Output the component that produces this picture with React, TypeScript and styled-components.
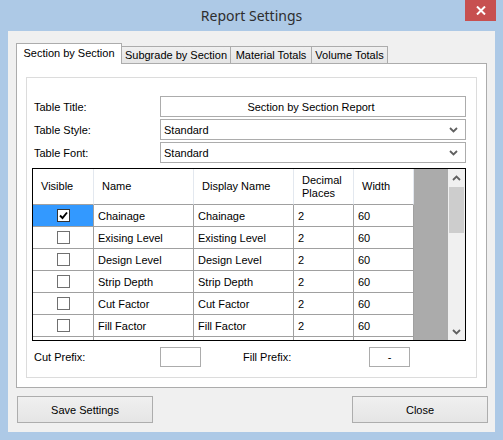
import React from 'react'
import styled, { createGlobalStyle } from 'styled-components'

const GlobalStyle = createGlobalStyle`
  html, body { margin: 0; padding: 0; }
  body {
    font-family: "Liberation Sans", Arial, sans-serif;
    font-size: 11px;
    color: #000;
    background: #adc9e6;
  }
  * { box-sizing: border-box; }
`

const Window = styled.div`
  position: relative;
  width: 503px;
  height: 440px;
  background: #adc9e6;
  display: flex;
  flex-direction: column;
  padding: 0 8px 8px;
  overflow: hidden;
`

const TitleBar = styled.div`
  height: 31px;
  display: flex;
  align-items: center;
  justify-content: center;
  padding-bottom: 1px;
  font-family: "Noto Sans", "Open Sans", sans-serif;
  font-size: 14px;
  color: #2e2e2e;
`

const CloseButton = styled.div`
  position: absolute;
  top: 0;
  right: 7px;
  width: 31px;
  height: 21px;
  background: #c75050;
  display: flex;
  align-items: center;
  justify-content: center;
`

const Client = styled.div`
  flex: 1;
  background: #f0f0f0;
  display: flex;
  flex-direction: column;
  padding: 12px 8px 0 8px;
`

const TabStrip = styled.div`
  display: flex;
  align-items: flex-end;
  height: 21px;
  position: relative;
  z-index: 1;
  margin-bottom: -1px;
`

const Tab = styled.div<{ $active?: boolean; $w: number }>`
  width: ${p => p.$w}px;
  height: ${p => (p.$active ? 21 : 18)}px;
  margin-left: ${p => (p.$active ? 0 : -1)}px;
  border: 1px solid #acacac;
  border-bottom: ${p => (p.$active ? 'none' : '1px solid #acacac')};
  background: ${p => (p.$active ? '#fff' : 'linear-gradient(#f0f0f0, #e5e5e5)')};
  display: flex;
  align-items: center;
  justify-content: center;
  padding-bottom: ${p => (p.$active ? 3 : 0)}px;
  white-space: nowrap;
  position: ${p => (p.$active ? 'relative' : 'static')};
  z-index: ${p => (p.$active ? 2 : 0)};
  &:first-child { margin-left: 0; }
`

const TabPanel = styled.div`
  height: 325px;
  background: #fff;
  border: 1px solid #acacac;
  padding: 13px 9px 9px 9px;
`

const GroupBox = styled.div`
  height: 100%;
  border: 1px solid #dcdcdc;
  padding: 18px 10px 10px 5px;
  display: flex;
  flex-direction: column;
`

const FormGrid = styled.div`
  display: grid;
  grid-template-columns: 128px 1fr;
  grid-auto-rows: 21px;
  row-gap: 2px;
`

const Label = styled.div`
  display: flex;
  align-items: center;
  padding-left: 2px;
`

const Field = styled.div<{ $center?: boolean }>`
  border: 1px solid #acacac;
  background: #fff;
  display: flex;
  align-items: center;
  justify-content: ${p => (p.$center ? 'center' : 'space-between')};
  padding: 0 7px 0 3px;
`

const Grid = styled.div`
  margin-top: 5px;
  height: 173px;
  border: 1px solid #000;
  display: flex;
  overflow: hidden;
`

const Columns = styled.div`
  width: 381px;
  display: flex;
  flex-direction: column;
`

const Row = styled.div<{ $h: number }>`
  display: flex;
  flex: 0 0 ${p => p.$h}px;
  height: ${p => p.$h}px;
`

const HeadCell = styled.div<{ $w: number }>`
  width: ${p => p.$w}px;
  border-right: 1px solid #e3e8ef;
  border-bottom: 1px solid #a0a0a0;
  background: #fff;
  display: flex;
  align-items: center;
  padding: 0 6px 0 8px;
  line-height: 13px;
`

const Cell = styled.div<{ $w: number; $selected?: boolean; $center?: boolean }>`
  width: ${p => p.$w}px;
  border-right: 1px solid #a0a0a0;
  border-bottom: 1px solid #a0a0a0;
  background: ${p => (p.$selected ? '#3399ff' : '#fff')};
  display: flex;
  align-items: center;
  justify-content: ${p => (p.$center ? 'center' : 'flex-start')};
  padding-left: ${p => (p.$center ? 0 : 4)}px;
  white-space: nowrap;
`

const CheckBox = styled.div<{ $dark?: boolean }>`
  width: 13px;
  height: 13px;
  border: 1px solid ${p => (p.$dark ? '#333' : '#707070')};
  background: #fff;
  display: flex;
  align-items: center;
  justify-content: center;
`

const GrayFill = styled.div`
  flex: 1;
  background: #ababab;
`

const ScrollBar = styled.div`
  width: 17px;
  background: #f0f0f0;
  display: flex;
  flex-direction: column;
`

const ScrollArrow = styled.div`
  height: 17px;
  display: flex;
  align-items: center;
  justify-content: center;
`

const Thumb = styled.div`
  height: 46px;
  margin: 1px 1px 0;
  background: #cdcdcd;
`

const Spacer = styled.div`
  flex: 1;
`

const PrefixRow = styled.div`
  margin-top: 6px;
  height: 20px;
  display: flex;
`

const PrefixLabel = styled(Label)<{ $w: number; $indent?: number }>`
  width: ${p => p.$w}px;
  padding-left: ${p => p.$indent ?? 2}px;
`

const PrefixBox = styled.div`
  width: 41px;
  border: 1px solid #acacac;
  background: #fff;
  display: flex;
  align-items: center;
  justify-content: center;
`

const ButtonRow = styled.div`
  margin: 8px -1px 0 1px;
  display: flex;
  justify-content: space-between;
`

const Button = styled.div`
  width: 136px;
  height: 27px;
  border: 1px solid #adadad;
  background: linear-gradient(#f0f0f0, #e5e5e5);
  display: flex;
  align-items: center;
  justify-content: center;
`

const Chevron = ({ up }: { up?: boolean }) => (
  <svg width="9" height="6" viewBox="0 0 9 6">
    <path
      d={up ? 'M1 5 L4.5 1.5 L8 5' : 'M1 1 L4.5 4.5 L8 1'}
      fill="none"
      stroke="#606060"
      strokeWidth="1.8"
    />
  </svg>
)

const widths = [61, 100, 100, 60, 60]
const headers = ['Visible', 'Name', 'Display Name', 'Decimal Places', 'Width']
const rows = [
  { name: 'Chainage', display: 'Chainage', checked: true },
  { name: 'Exising Level', display: 'Existing Level' },
  { name: 'Design Level', display: 'Design Level' },
  { name: 'Strip Depth', display: 'Strip Depth' },
  { name: 'Cut Factor', display: 'Cut Factor' },
  { name: 'Fill Factor', display: 'Fill Factor' },
  { name: '', display: '', blank: true },
]

export default function App() {
  return (
    <Window>
      <GlobalStyle />
      <TitleBar>Report Settings</TitleBar>
      <CloseButton>
        <svg width="10" height="9" viewBox="0 0 10 9">
          <path d="M1 0.5 L9 8.5 M9 0.5 L1 8.5" stroke="#fff" strokeWidth="2" />
        </svg>
      </CloseButton>
      <Client>
        <TabStrip>
          <Tab $active $w={106}>Section by Section</Tab>
          <Tab $w={110}>Subgrade by Section</Tab>
          <Tab $w={82}>Material Totals</Tab>
          <Tab $w={77}>Volume Totals</Tab>
        </TabStrip>
        <TabPanel>
          <GroupBox>
            <FormGrid>
              <Label>Table Title:</Label>
              <Field $center>Section by Section Report</Field>
              <Label>Table Style:</Label>
              <Field>Standard<Chevron /></Field>
              <Label>Table Font:</Label>
              <Field>Standard<Chevron /></Field>
            </FormGrid>
            <Grid>
              <Columns>
                <Row $h={36}>
                  {headers.map((h, i) => (
                    <HeadCell key={h} $w={widths[i]}>{h}</HeadCell>
                  ))}
                </Row>
                {rows.map((r, i) => (
                  <Row key={i} $h={22}>
                    <Cell $w={widths[0]} $center $selected={i === 0}>
                      {!r.blank && (
                        <CheckBox $dark={i === 0}>
                          {r.checked && (
                            <svg width="11" height="11" viewBox="0 0 11 11">
                              <path d="M2 5.5 L4.5 8 L9 2.5" fill="none" stroke="#000" strokeWidth="1.9" />
                            </svg>
                          )}
                        </CheckBox>
                      )}
                    </Cell>
                    <Cell $w={widths[1]}>{r.name}</Cell>
                    <Cell $w={widths[2]}>{r.display}</Cell>
                    <Cell $w={widths[3]}>{r.blank ? '' : '2'}</Cell>
                    <Cell $w={widths[4]}>{r.blank ? '' : '60'}</Cell>
                  </Row>
                ))}
              </Columns>
              <GrayFill />
              <ScrollBar>
                <ScrollArrow><Chevron up /></ScrollArrow>
                <Thumb />
                <Spacer />
                <ScrollArrow><Chevron /></ScrollArrow>
              </ScrollBar>
            </Grid>
            <PrefixRow>
              <PrefixLabel $w={128}>Cut Prefix:</PrefixLabel>
              <PrefixBox />
              <PrefixLabel $w={168} $indent={42}>Fill Prefix:</PrefixLabel>
              <PrefixBox>-</PrefixBox>
            </PrefixRow>
          </GroupBox>
        </TabPanel>
        <ButtonRow>
          <Button>Save Settings</Button>
          <Button>Close</Button>
        </ButtonRow>
      </Client>
    </Window>
  )
}
